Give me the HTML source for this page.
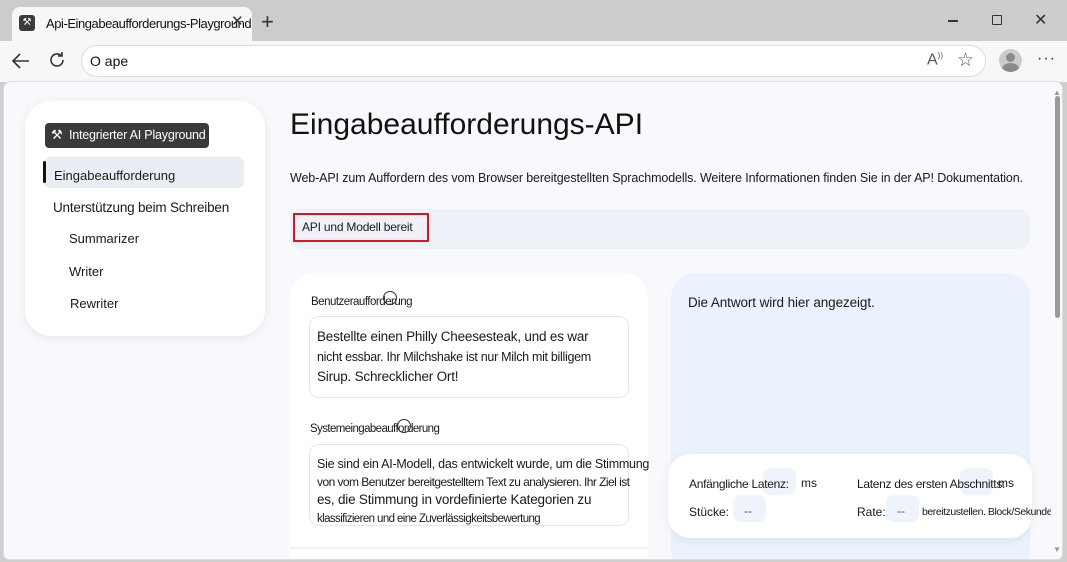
<!DOCTYPE html>
<html><head><meta charset="utf-8"><style>
*{box-sizing:border-box;margin:0;padding:0}
body{width:1067px;height:562px;overflow:hidden;background:#cfcfcf;font-family:"Liberation Sans",sans-serif;color:#1a1a1a;position:relative}
.a{position:absolute}
.t{white-space:nowrap}
</style></head><body>
<div class="a" style="left:0;top:0;width:1067px;height:41px;background:#cccccc"></div>
<div class="a" style="left:12px;top:7px;width:240px;height:36px;background:#f7f7f7;border-radius:8px 8px 0 0"></div>
<div class="a" style="left:19px;top:15px;width:16px;height:16px;background:#3b3b3b;border-radius:3px;color:#fff;font-size:10px;text-align:center;line-height:16px">⚒</div>
<div class="a t" style="left:46px;top:16px;font-size:13px;color:#111;letter-spacing:-0.45px">Api-Eingabeaufforderungs-Playground</div>
<div class="a t" style="left:231px;top:12px;font-size:15px;color:#333">✕</div>
<div class="a t" style="left:261px;top:9px;font-size:22px;color:#333;font-weight:300">+</div>
<div class="a" style="left:948px;top:20px;width:10px;height:1.5px;background:#333"></div>
<div class="a" style="left:992px;top:15px;width:10px;height:10px;border:1.3px solid #333;border-radius:1px"></div>
<div class="a t" style="left:1034px;top:10px;font-size:16px;color:#333">✕</div>
<div class="a" style="left:0;top:41px;width:1067px;height:41px;background:#f7f7f7"></div>
<svg class="a" style="left:10px;top:51px" width="22" height="20"><path d="M19 10H3M10 3L3 10l7 7" stroke="#333" stroke-width="1.6" fill="none"/></svg>
<svg class="a" style="left:47px;top:50px" width="20" height="20"><path d="M16 10a6 6 0 1 1-2-4.5M15 2v4h-4" stroke="#333" stroke-width="1.6" fill="none"/></svg>
<div class="a" style="left:81px;top:45px;width:905px;height:32px;background:#fff;border:1px solid #dcdcdc;border-radius:16px"></div>
<div class="a t" style="left:90px;top:53px;font-size:14px;color:#111">O ape</div>
<div class="a t" style="left:927px;top:51px;font-size:16px;color:#555">A<sup style="font-size:8px">))</sup></div>
<div class="a t" style="left:957px;top:49px;font-size:19px;color:#555">☆</div>
<div class="a" style="left:999px;top:49px;width:23px;height:23px;background:#ccc;border-radius:50%;overflow:hidden"><div class="a" style="left:7px;top:4px;width:9px;height:9px;border-radius:50%;background:#8a8a8a"></div><div class="a" style="left:3px;top:14px;width:17px;height:12px;border-radius:50%;background:#8a8a8a"></div></div>
<div class="a t" style="left:1037px;top:50px;font-size:16px;color:#333;letter-spacing:1px">···</div>
<div class="a" style="left:3px;top:81px;width:1060px;height:479px;background:#f8f9fd;border:1px solid #ddd;border-radius:8px 8px 6px 6px;overflow:hidden">
 <div class="a" style="left:21px;top:19px;width:240px;height:235px;background:#fff;border-radius:26px;box-shadow:0 2px 10px rgba(0,0,0,.08)"></div>
 <div class="a t" style="left:41px;top:41px;width:164px;height:25px;background:#3a3a3a;border-radius:4px;color:#fff;font-size:12.5px;line-height:25px;padding-left:24px;letter-spacing:-0.2px">Integrierter AI Playground</div>
 <div class="a t" style="left:47px;top:45px;color:#fff;font-size:13px">⚒</div>
 <div class="a" style="left:40px;top:75px;width:200px;height:31px;background:#e9edf4;border-radius:6px"></div>
 <div class="a" style="left:39px;top:79px;width:3px;height:22px;background:#111;border-radius:2px"></div>
 <div class="a t" style="left:50px;top:86px;font-size:13px">Eingabeaufforderung</div>
 <div class="a t" style="left:49px;top:118px;font-size:13.5px;letter-spacing:-0.2px">Unterstützung beim Schreiben</div>
 <div class="a t" style="left:65px;top:149px;font-size:13px">Summarizer</div>
 <div class="a t" style="left:65px;top:182px;font-size:13px">Writer</div>
 <div class="a t" style="left:66px;top:214px;font-size:13px">Rewriter</div>
 <div class="a t" style="left:286px;top:26px;font-size:30px;color:#111">Eingabeaufforderungs-API</div>
 <div class="a t" style="left:286px;top:89px;font-size:12.5px;letter-spacing:-0.13px">Web-API zum Auffordern des vom Browser bereitgestellten Sprachmodells. Weitere Informationen finden Sie in der AP! Dokumentation.</div>
 <div class="a" style="left:286px;top:127px;width:740px;height:40px;background:#eef2f8;border-radius:12px"></div>
 <div class="a t" style="left:289px;top:131px;width:136px;height:29px;border:2px solid #e0141e;font-size:12px;line-height:25px;padding-left:7px;letter-spacing:-0.2px">API und Modell bereit</div>
 <div class="a" style="left:286px;top:191px;width:358px;height:300px;background:#fff;border-radius:24px"></div>
 <div class="a" style="left:286px;top:465px;width:358px;height:2px;background:#eef1f6"></div>
 <div class="a t" style="left:307px;top:214px;font-size:11.5px;letter-spacing:-0.5px">Benutzeraufforderung</div>
 <div class="a" style="left:379px;top:209px;width:14px;height:14px;border:1.3px solid #333;border-radius:50%"></div>
 <div class="a" style="left:305px;top:234px;width:320px;height:82px;border:1px solid #e4e7ec;border-radius:10px"></div>
 <div class="a t" style="left:313px;top:245px;font-size:13.5px;line-height:20px;letter-spacing:-0.2px">Bestellte einen Philly Cheesesteak, und es war<br><span style="font-size:12.5px;letter-spacing:-0.3px">nicht essbar. Ihr Milchshake ist nur Milch mit billigem</span><br>Sirup. Schrecklicher Ort!</div>
 <div class="a t" style="left:306px;top:341px;font-size:11.5px;letter-spacing:-0.6px">Systemeingabeaufforderung</div>
 <div class="a" style="left:393px;top:337px;width:14px;height:14px;border:1.3px solid #333;border-radius:50%"></div>
 <div class="a" style="left:305px;top:362px;width:320px;height:82px;border:1px solid #e4e7ec;border-radius:10px;overflow:hidden"></div>
 <div class="a t" style="left:313px;top:374px;font-size:12.5px;line-height:17.5px;width:350px;overflow:hidden;letter-spacing:-0.25px">Sie sind ein AI-Modell, das entwickelt wurde, um die Stimmung<br><span style="font-size:12px;letter-spacing:-0.55px">von vom Benutzer bereitgestelltem Text zu analysieren. Ihr Ziel ist</span><br><span style="font-size:13.5px;letter-spacing:-0.2px">es, die Stimmung in vordefinierte Kategorien zu</span><br><span style="font-size:11.5px;letter-spacing:-0.6px">klassifizieren und eine Zuverlässigkeitsbewertung</span></div>
 <div class="a" style="left:667px;top:191px;width:359px;height:300px;background:#ebf2fe;border-radius:24px"></div>
 <div class="a t" style="left:684px;top:213px;font-size:13.5px;letter-spacing:-0.1px">Die Antwort wird hier angezeigt.</div>
 <div class="a" style="left:664px;top:372px;width:364px;height:84px;background:#fff;border-radius:22px;box-shadow:0 2px 10px rgba(0,0,0,.08)"></div>
 <div class="a" style="left:759px;top:386px;width:33px;height:27px;background:#eef3fc;border-radius:8px"></div>
 <div class="a" style="left:956px;top:386px;width:33px;height:27px;background:#eef3fc;border-radius:8px"></div>
 <div class="a" style="left:729px;top:413px;width:33px;height:27px;background:#eef3fc;border-radius:8px"></div>
 <div class="a" style="left:882px;top:413px;width:33px;height:27px;background:#eef3fc;border-radius:8px"></div>
 <div class="a t" style="left:685px;top:395px;font-size:12px;letter-spacing:-0.3px">Anfängliche Latenz:</div>
 <div class="a t" style="left:797px;top:394px;font-size:12px">ms</div>
 <div class="a t" style="left:853px;top:395px;font-size:12px;letter-spacing:-0.3px">Latenz des ersten Abschnitts:</div>
 <div class="a t" style="left:994px;top:394px;font-size:12px">ms</div>
 <div class="a t" style="left:685px;top:423px;font-size:12px">Stücke:</div>
 <div class="a t" style="left:740px;top:422px;font-size:12px;color:#555">--</div>
 <div class="a t" style="left:853px;top:423px;font-size:12px">Rate:</div>
 <div class="a t" style="left:893px;top:422px;font-size:12px;color:#555">--</div>
 <div class="a t" style="left:918px;top:424px;font-size:10.5px;letter-spacing:-0.45px">bereitzustellen. Block/Sekunde</div>
 <div class="a" style="left:1047px;top:0;width:13px;height:479px;background:#f8f9fd"></div>
 <div class="a t" style="left:1049px;top:6px;font-size:8px;color:#999">▲</div>
 <div class="a" style="left:1051px;top:14px;width:5px;height:222px;background:#9a9a9a;border-radius:3px"></div>
 <div class="a t" style="left:1049px;top:463px;font-size:8px;color:#999">▼</div>
</div>
</body></html>
